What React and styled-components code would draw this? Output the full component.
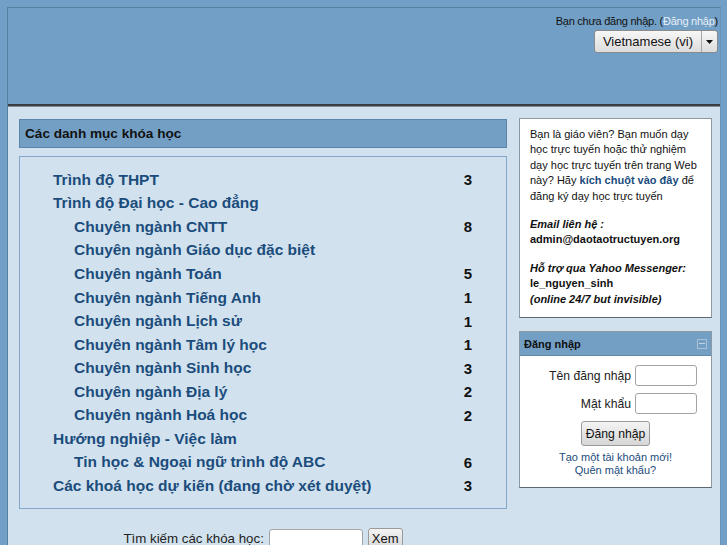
import React from "react";
import styled, { createGlobalStyle } from "styled-components";

const Global = createGlobalStyle`
  html, body { margin: 0; padding: 0; }
  body {
    background: #729fc5;
    font-family: "Liberation Sans", Arial, sans-serif;
    color: #000;
  }
`;

const Outer = styled.div`
  padding: 7px 7px 0 7px;
`;

const Page = styled.div`
  width: 712px;
  border-left: 1px solid #55809f;
  border-top: 1px solid #55809f;
  border-right: 1px solid #6a93b8;
`;

const Header = styled.header`
  height: 98px;
  box-sizing: border-box;
  padding: 6px 2px 0 0;
  display: flex;
  flex-direction: column;
  align-items: flex-end;
  border-bottom: 2px solid #3b3f44;
`;

const LoginInfo = styled.div`
  font-size: 11px;
  letter-spacing: -0.25px;
  line-height: 14px;
  color: #111;
  a { color: #e6eef7; text-decoration: none; }
`;

const LangSelect = styled.div`
  margin-top: 2px;
  height: 23px;
  display: flex;
  border: 1px solid #8b8b8b;
  border-radius: 3px;
  background: linear-gradient(#f7f7f7, #dcdcdc);
  box-sizing: border-box;
  font-size: 13px;
`;

const LangText = styled.span`
  padding: 0 8px;
  line-height: 21px;
  color: #111;
`;

const LangArrow = styled.span`
  width: 15px;
  border-left: 1px solid #a5a5a5;
  display: flex;
  align-items: center;
  justify-content: center;
`;

const Content = styled.div`
  background: #d1e2ee;
  border-top: 1px solid #7d8c99;
  display: flex;
  gap: 12px;
  padding: 11px 7px 0 11px;
  min-height: 450px;
`;

const Main = styled.main`
  width: 488px;
  display: flex;
  flex-direction: column;
`;

const SectionTitle = styled.h2`
  margin: 1px 0 0;
  height: 29px;
  box-sizing: border-box;
  background: #739fc5;
  border: 1px solid #5a84aa;
  font-size: 13.6px;
  font-weight: bold;
  line-height: 27px;
  padding-left: 5px;
  color: #111;
`;

const CategoryBox = styled.div`
  margin-top: 8px;
  border: 1px solid #82a8cc;
  padding: 11px 0 10px;
`;

const Row = styled.div`
  height: 23.55px;
  display: flex;
  align-items: center;
  justify-content: space-between;
  padding-left: ${(p) => (p.$sub ? 54 : 33)}px;
  padding-right: 34px;
  font-size: 15.5px;
  font-weight: bold;
`;

const CatLink = styled.a`
  color: #1b4c7c;
  text-decoration: none;
`;

const Count = styled.span`
  color: #111;
  font-size: 15px;
`;

const Search = styled.form`
  margin-top: 19px;
  display: flex;
  justify-content: center;
  align-items: center;
  gap: 5px;
  font-size: 13.3px;
  color: #222;
`;

const TextInput = styled.input`
  width: ${(p) => p.$w}px;
  height: ${(p) => p.$h}px;
  box-sizing: border-box;
  border: 1px solid #a4a4a4;
  border-radius: 3px;
  background: #fff;
  margin: 0;
  padding: 0 3px;
`;

const Button = styled.button`
  font-family: "Liberation Sans", Arial, sans-serif;
  font-size: ${(p) => p.$fs || 13}px;
  color: #111;
  height: ${(p) => p.$h}px;
  padding: 0 ${(p) => p.$px}px;
  border: 1px solid #9a9a9a;
  border-radius: 3px;
  background: linear-gradient(#f4f4f4, #d6d6d6);
  margin: 0;
`;

const Side = styled.aside`
  width: 193px;
  display: flex;
  flex-direction: column;
  gap: 13px;
`;

const InfoBox = styled.div`
  background: #fff;
  border: 1px solid #8e98a2;
  border-bottom-color: #5d6873;
  padding: 8px 10px 10px;
  font-size: 11px;
  line-height: 15.4px;
  color: #111;
  p { margin: 0 0 13px; }
  p:last-child { margin-bottom: 0; }
  a { color: #1b4c7c; font-weight: bold; text-decoration: none; }
`;

const LoginBlock = styled.div`
  background: #fff;
  border: 1px solid #8e98a2;
  border-bottom-color: #5d6873;
`;

const BlockHead = styled.div`
  height: 23px;
  background: #739fc5;
  border-bottom: 1px solid #6189ad;
  display: flex;
  align-items: center;
  justify-content: space-between;
  padding: 0 4px 0 4px;
  font-size: 11px;
  font-weight: bold;
  color: #111;
`;

const HideIcon = styled.span`
  width: 8px;
  height: 8px;
  border: 1px solid #a9c0d6;
  display: flex;
  align-items: center;
  justify-content: center;
  &::after {
    content: "";
    width: 6px;
    height: 1px;
    background: #c4d4e3;
  }
`;

const LoginBody = styled.div`
  padding: 9px 0 10px;
  display: flex;
  flex-direction: column;
  align-items: center;
  font-size: 12.2px;
  color: #222;
`;

const FieldRow = styled.label`
  align-self: stretch;
  display: flex;
  justify-content: flex-end;
  align-items: center;
  gap: 4px;
  padding-right: 14px;
  margin-bottom: 7px;
`;

const Links = styled.div`
  margin-top: 5px;
  text-align: center;
  font-size: 11px;
  line-height: 13px;
  a { color: #1b4c7c; text-decoration: none; display: block; }
`;

const categories = [
  { name: "Trình độ THPT", count: 3 },
  { name: "Trình độ Đại học - Cao đẳng" },
  { name: "Chuyên ngành CNTT", count: 8, sub: true },
  { name: "Chuyên ngành Giáo dục đặc biệt", sub: true },
  { name: "Chuyên ngành Toán", count: 5, sub: true },
  { name: "Chuyên ngành Tiếng Anh", count: 1, sub: true },
  { name: "Chuyên ngành Lịch sử", count: 1, sub: true },
  { name: "Chuyên ngành Tâm lý học", count: 1, sub: true },
  { name: "Chuyên ngành Sinh học", count: 3, sub: true },
  { name: "Chuyên ngành Địa lý", count: 2, sub: true },
  { name: "Chuyên ngành Hoá học", count: 2, sub: true },
  { name: "Hướng nghiệp - Việc làm" },
  { name: "Tin học & Ngoại ngữ trình độ ABC", count: 6, sub: true },
  { name: "Các khoá học dự kiến (đang chờ xét duyệt)", count: 3 },
];

export default function App() {
  return (
    <>
      <Global />
      <Outer>
        <Page>
          <Header>
            <LoginInfo>
              Bạn chưa đăng nhập. (<a href="#">Đăng nhập</a>)
            </LoginInfo>
            <LangSelect>
              <LangText>Vietnamese (vi)</LangText>
              <LangArrow>
                <svg width="7" height="4" viewBox="0 0 7 4">
                  <path d="M0 0h7L3.5 4z" fill="#111" />
                </svg>
              </LangArrow>
            </LangSelect>
          </Header>
          <Content>
            <Main>
              <SectionTitle>Các danh mục khóa học</SectionTitle>
              <CategoryBox>
                {categories.map((c) => (
                  <Row key={c.name} $sub={c.sub}>
                    <CatLink href="#">{c.name}</CatLink>
                    {c.count != null && <Count>{c.count}</Count>}
                  </Row>
                ))}
              </CategoryBox>
              <Search>
                <span>Tìm kiếm các khóa học:</span>
                <TextInput $w={94} $h={20} />
                <Button type="button" $h={22} $px={3}>Xem</Button>
              </Search>
            </Main>
            <Side>
              <InfoBox>
                <p>
                  Bạn là giáo viên? Bạn muốn dạy học trực tuyến hoặc thử nghiệm
                  dạy học trực tuyến trên trang Web này? Hãy{" "}
                  <a href="#">kích chuột vào đây</a> để đăng ký dạy học trực tuyến
                </p>
                <p>
                  <b><i>Email liên hệ :</i></b>
                  <br />
                  <b>admin@daotaotructuyen.org</b>
                </p>
                <p>
                  <b><i>Hỗ trợ qua Yahoo Messenger:</i></b>
                  <br />
                  <b>le_nguyen_sinh</b>
                  <br />
                  <b><i>(online 24/7 but invisible)</i></b>
                </p>
              </InfoBox>
              <LoginBlock>
                <BlockHead>
                  <span>Đăng nhập</span>
                  <HideIcon />
                </BlockHead>
                <LoginBody>
                  <FieldRow>
                    Tên đăng nhập <TextInput $w={62} $h={21} />
                  </FieldRow>
                  <FieldRow>
                    Mật khẩu <TextInput $w={62} $h={21} />
                  </FieldRow>
                  <Button type="button" $h={25} $px={4} $fs={12.2}>Đăng nhập</Button>
                  <Links>
                    <a href="#">Tạo một tài khoản mới!</a>
                    <a href="#">Quên mật khẩu?</a>
                  </Links>
                </LoginBody>
              </LoginBlock>
            </Side>
          </Content>
        </Page>
      </Outer>
    </>
  );
}
